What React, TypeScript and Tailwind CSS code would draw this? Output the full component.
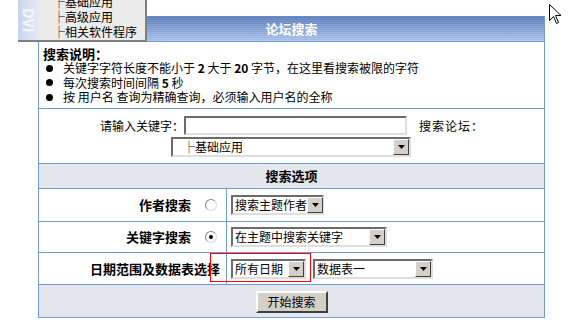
import React from "react";

const font = "font-['SimSun','Noto_Sans_CJK_SC','Noto_Sans',sans-serif]";

function Arrow() {
  return (
    <div className="flex h-[16px] w-[16px] shrink-0 items-center justify-center border border-t-white border-l-white border-b-[#404040] border-r-[#404040] bg-[#d4d0c8]">
      <svg width="7" height="4" viewBox="0 0 7 4">
        <polygon points="0,0 7,0 3.5,4" fill="#000" />
      </svg>
    </div>
  );
}

function Select({ className, text }: { className: string; text: string }) {
  return (
    <div className={`flex h-[20px] items-center justify-between border-2 border-t-[#6b6b6b] border-l-[#6b6b6b] border-b-[#dedede] border-r-[#dedede] bg-white ${className}`}>
      <span className="whitespace-pre pl-[2px] text-[12px] leading-[16px] text-black">{text}</span>
      <Arrow />
    </div>
  );
}

function Radio({ checked }: { checked?: boolean }) {
  return (
    <div className="flex h-[12px] w-[12px] items-center justify-center rounded-full border border-t-[#8a8a8a] border-l-[#8a8a8a] border-b-[#d8d8d8] border-r-[#d8d8d8] bg-white">
      {checked && <div className="h-[4px] w-[4px] rounded-full bg-black" />}
    </div>
  );
}

function OptionRow({ label, radio, checked, children, h }: { label: string; radio?: boolean; checked?: boolean; children: React.ReactNode; h: string }) {
  return (
    <div className={`flex border-t border-[#6f9ad6] ${h}`}>
      <div className={`flex w-[188px] items-center justify-end border-r border-[#6f9ad6] ${radio ? "gap-[14px] pr-[9px]" : "pr-[6px]"}`}>
        <span className="text-[13px] font-bold leading-[16px]">{label}</span>
        {radio && <Radio checked={checked} />}
      </div>
      <div className="relative flex flex-1 items-center gap-[7px] pl-[4px]">{children}</div>
    </div>
  );
}

const tips: React.ReactNode[] = [
  <>关键字字符长度不能小于 <b>2</b> 大于 <b>20</b> 字节，在这里看搜索被限的字符</>,
  <>每次搜索时间间隔 <b>5</b> 秒</>,
  <>按 用户名 查询为精确查询，必须输入用户名的全称</>,
];

export default function App() {
  return (
    <div className={`relative h-[323px] w-[579px] overflow-hidden bg-white text-black ${font}`}>
      <div className="ml-[38px] mt-[16px] w-[507px] border-x border-b border-[#6f9ad6]">
        {/* title bar */}
        <div className="flex h-[25px] items-center justify-center bg-[repeating-linear-gradient(180deg,rgba(255,255,255,0.14)_0px,rgba(255,255,255,0.14)_1px,transparent_1px,transparent_2px),linear-gradient(180deg,#5579ba,#a9c0e8)]">
          <span className="text-[13px] font-bold leading-[16px] text-white">论坛搜索</span>
        </div>

        {/* description */}
        <div className="h-[67px] border-t border-[#6f9ad6] pl-[4px] pt-[4px]">
          <div className="text-[13px] font-bold leading-[15px]">搜索说明：</div>
          {tips.map((t, i) => (
            <div key={i} className="flex items-center text-[12px] leading-[14.5px]">
              <span className="ml-[3px] mr-[10px] h-[7px] w-[7px] rounded-full bg-black" />
              <span className="whitespace-pre">{t}</span>
            </div>
          ))}
        </div>

        {/* keyword input */}
        <div className="flex h-[55px] flex-col gap-[2px] border-t border-[#6f9ad6] pt-[7px]">
          <div className="flex items-center pl-[61px]">
            <span className="text-[12px] leading-[16px]">请输入关键字：</span>
            <div className="h-[19px] w-[223px] border-2 border-t-[#6b6b6b] border-l-[#6b6b6b] border-b-[#dedede] border-r-[#dedede] bg-white" />
            <span className="ml-[12px] text-[12px] leading-[16px] tracking-[1px]">搜索论坛：</span>
          </div>
          <div className="pl-[132px]">
            <Select className="w-[240px]" text={"   ├基础应用"} />
          </div>
        </div>

        {/* options header */}
        <div className="flex h-[25px] items-center justify-center border-t border-[#6f9ad6] bg-[#e3e7ec]">
          <span className="text-[13px] font-bold leading-[16px]">搜索选项</span>
        </div>

        <OptionRow label="作者搜索" radio h="h-[33px]">
          <Select className="w-[93px]" text="搜索主题作者" />
        </OptionRow>
        <OptionRow label="关键字搜索" radio checked h="h-[31px]">
          <Select className="w-[156px]" text="在主题中搜索关键字" />
        </OptionRow>
        <OptionRow label="日期范围及数据表选择" h="h-[32px]">
          <Select className="w-[75px]" text="所有日期" />
          <Select className="w-[120px]" text="数据表一" />
          <div className="absolute left-[-17px] top-[0px] h-[29px] w-[101px] border-[1.5px] border-[#ff0000]" />
        </OptionRow>

        {/* submit */}
        <div className="flex h-[33px] items-center justify-center border-t border-[#6f9ad6] bg-[#e3e7ec]">
          <button className="mt-[1px] h-[22px] w-[72px] border-2 border-t-white border-l-white border-b-[#404040] border-r-[#404040] bg-[#d4d0c8] text-[12px] leading-[16px]">
            开始搜索
          </button>
        </div>
      </div>

      {/* popup menu overlay */}
      <div className="absolute left-[18px] top-0 flex h-[42px] w-[129px] border-b-2 border-r-2 border-[#7f7f7f] bg-[#ececec]">
        <div className="flex w-[22px] items-center justify-center overflow-hidden bg-[linear-gradient(90deg,#c6d3ea,#e6edf8)]">
          <span className="text-[15px] font-bold leading-none text-[#f4f7fc] [writing-mode:vertical-rl]">DVI</span>
        </div>
        <div className="mt-[-6px] flex flex-col pl-[13px]">
          {["├基础应用", "├高级应用", "├相关软件程序"].map((s) => (
            <div key={s} className="h-[15px] text-[12px] leading-[15px]">{s}</div>
          ))}
        </div>
      </div>

      {/* mouse cursor */}
      <svg className="absolute left-[549px] top-[4px]" width="13" height="21" viewBox="0 0 13 21">
        <path d="M0.5 0.5 L0.5 16.5 L4.5 12.5 L7.5 19.5 L9.5 18.5 L6.5 11.5 L12 11.5 Z" fill="#fff" stroke="#000" strokeWidth="1" />
      </svg>
    </div>
  );
}
